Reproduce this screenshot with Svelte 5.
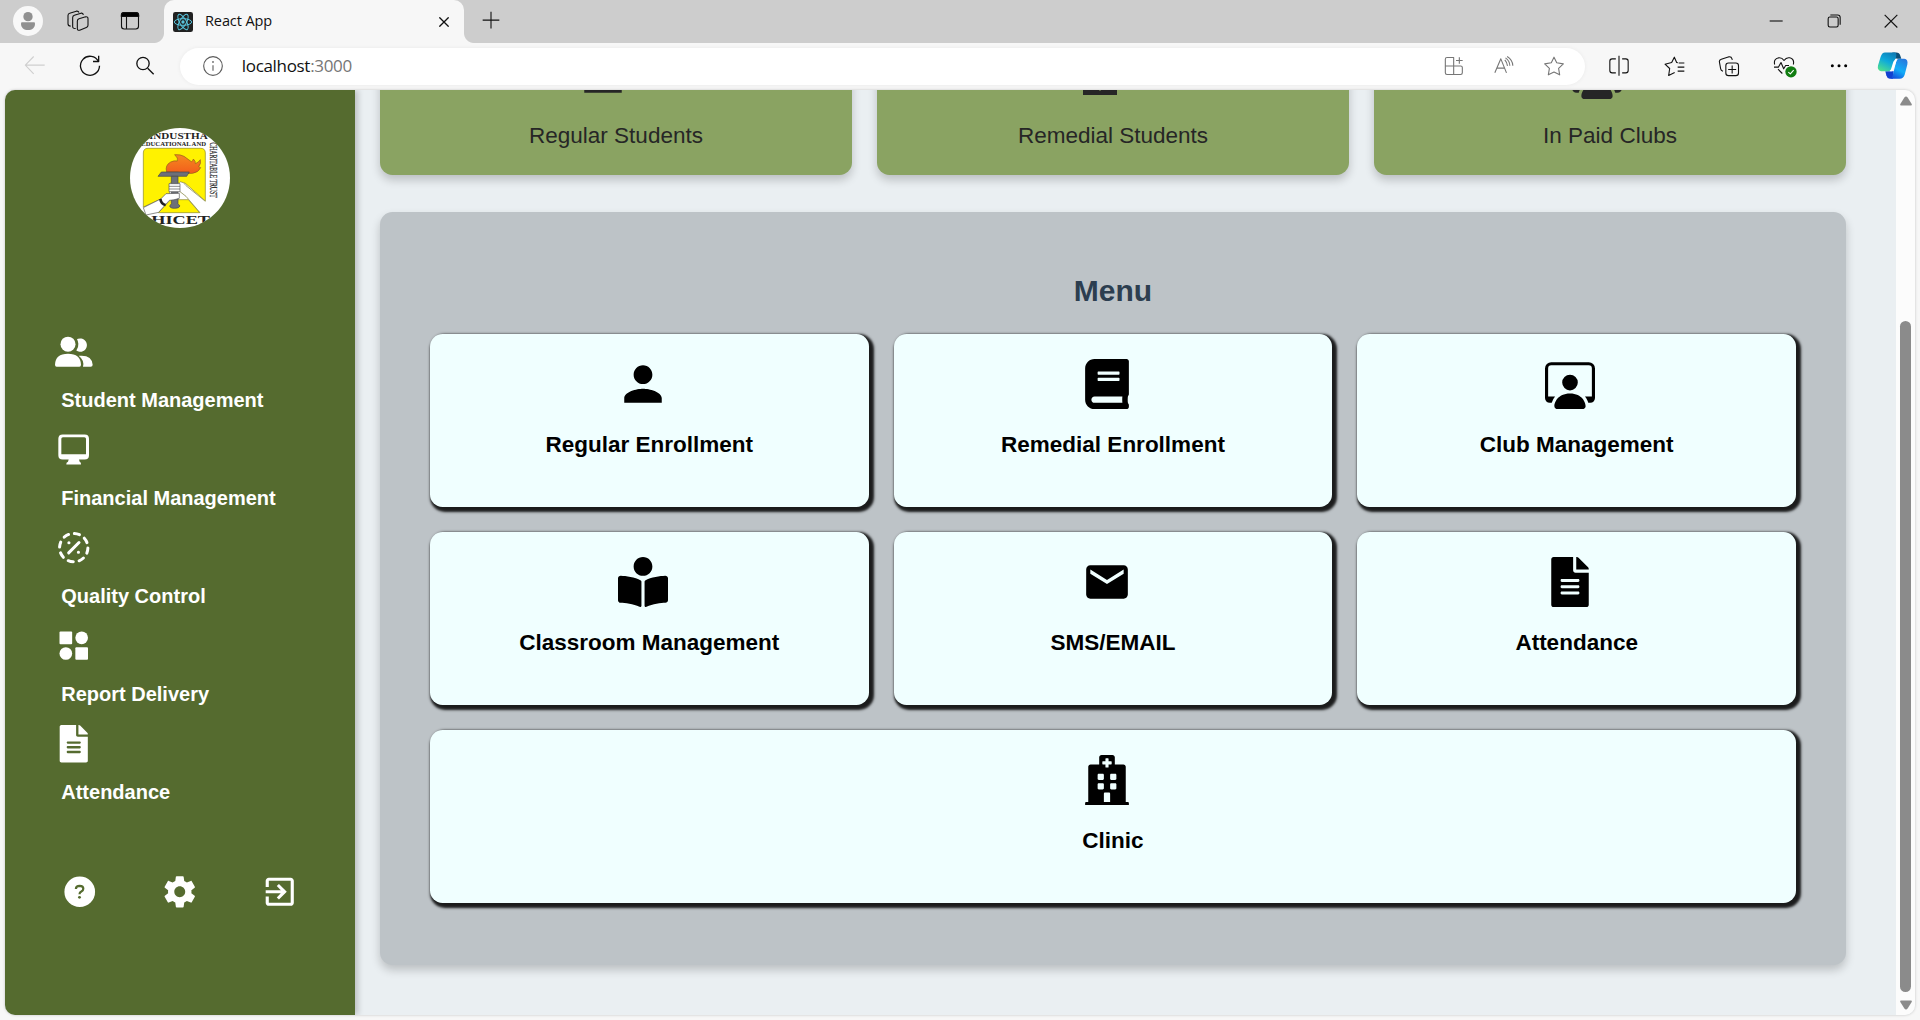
<script>
  const personPath =
    'M256 256c52.805 0 96-43.201 96-96s-43.195-96-96-96-96 43.201-96 96 43.195 96 96 96zm0 48c-63.598 0-192 32.402-192 96v48h384v-48c0-63.598-128.402-96-192-96z';
  const workspacePath =
    'M4 16s-1 0-1-1 1-4 5-4 5 3 5 4-1 1-1 1H4Zm4-5.95a2.5 2.5 0 1 0 0-5 2.5 2.5 0 0 0 0 5ZM2 1a2 2 0 0 0-2 2v9.5A1.5 1.5 0 0 0 1.5 14h.653a5.373 5.373 0 0 1 1.066-2H1V3a1 1 0 0 1 1-1h12a1 1 0 0 1 1 1v9h-2.219c.554.654.89 1.373 1.066 2h.653a1.5 1.5 0 0 0 1.5-1.5V3a2 2 0 0 0-2-2H2Z';
  const filePath =
    'M224 136V0H24C10.7 0 0 10.7 0 24v464c0 13.3 10.7 24 24 24h336c13.3 0 24-10.7 24-24V160H248c-13.2 0-24-10.8-24-24zm64 236c0 6.6-5.4 12-12 12H108c-6.6 0-12-5.4-12-12v-8c0-6.6 5.4-12 12-12h168c6.6 0 12 5.4 12 12v8zm0-64c0 6.6-5.4 12-12 12H108c-6.6 0-12-5.4-12-12v-8c0-6.6 5.4-12 12-12h168c6.6 0 12 5.4 12 12v8zm0-72v8c0 6.6-5.4 12-12 12H108c-6.6 0-12-5.4-12-12v-8c0-6.6 5.4-12 12-12h168c6.6 0 12 5.4 12 12zm96-114.1v6.1H256V0h6.1c6.4 0 12.5 2.5 17 7l97.9 98c4.5 4.5 7 10.6 7 16.9z';

  const stats = [
    { label: 'Regular Students', box: '0 0 512 512', path: personPath },
    { label: 'Remedial Students', box: '0 0 50 50', path: 'M8 20h34v26h-34zM24 30v11.6h2v-11.6z' },
    { label: 'In Paid Clubs', box: '0 0 16 16', path: workspacePath }
  ];

  const menu = [
    { label: 'Regular Enrollment', box: '0 0 512 512', path: personPath },
    {
      label: 'Remedial Enrollment',
      box: '0 0 448 512',
      path: 'M448 360V24c0-13.3-10.7-24-24-24H96C43 0 0 43 0 96v320c0 53 43 96 96 96h328c13.3 0 24-10.7 24-24v-16c0-7.5-3.5-14.3-8.9-18.7-4.2-15.4-4.2-59.3 0-74.7 5.4-4.3 8.9-11.1 8.9-18.6zM128 134c0-3.3 2.7-6 6-6h212c3.3 0 6 2.7 6 6v20c0 3.3-2.7 6-6 6H134c-3.3 0-6-2.7-6-6v-20zm0 64c0-3.3 2.7-6 6-6h212c3.3 0 6 2.7 6 6v20c0 3.3-2.7 6-6 6H134c-3.3 0-6-2.7-6-6v-20zm253.4 250H96c-17.7 0-32-14.3-32-32 0-17.6 14.4-32 32-32h285.4c-1.9 17.1-1.9 46.9 0 64z'
    },
    { label: 'Club Management', box: '0 0 16 16', path: workspacePath },
    {
      label: 'Classroom Management',
      box: '0 0 512 512',
      path: 'M352 96c0-53.02-42.98-96-96-96s-96 42.98-96 96 42.98 96 96 96 96-42.98 96-96zM233.59 241.1c-59.33-36.32-155.43-46.3-203.79-49.05C13.55 191.13 0 203.51 0 219.14v222.8c0 14.33 11.59 26.28 26.49 27.05 43.66 2.29 131.99 10.68 193.04 41.43 9.37 4.72 20.48-1.71 20.48-11.87V252.56c-.01-4.67-2.32-8.95-6.42-11.46zm248.61-49.05c-48.35 2.74-144.46 12.73-203.78 49.05-4.1 2.51-6.41 6.96-6.41 11.63v245.79c0 10.19 11.14 16.63 20.54 11.9 61.04-30.72 149.32-39.11 192.97-41.4 14.9-.78 26.49-12.73 26.49-27.06V219.14c-.01-15.63-13.56-28.01-29.81-27.09z'
    },
    {
      label: 'SMS/EMAIL',
      box: '0 0 24 24',
      path: 'M20 4H4c-1.1 0-1.99.9-1.99 2L2 18c0 1.1.9 2 2 2h16c1.1 0 2-.9 2-2V6c0-1.1-.9-2-2-2zm0 4l-8 5-8-5V6l8 5 8-5v2z'
    },
    { label: 'Attendance', box: '0 0 384 512', path: filePath },
    {
      label: 'Clinic',
      box: '0 0 448 512',
      wide: true,
      path: 'M448 492v20H0v-20c0-6.627 5.373-12 12-12h20V120c0-13.255 10.745-24 24-24h88V24c0-13.255 10.745-24 24-24h112c13.255 0 24 10.745 24 24v72h88c13.255 0 24 10.745 24 24v360h20c6.627 0 12 5.373 12 12zM308 192h-40c-6.627 0-12 5.373-12 12v40c0 6.627 5.373 12 12 12h40c6.627 0 12-5.373 12-12v-40c0-6.627-5.373-12-12-12zm-168 64h40c6.627 0 12-5.373 12-12v-40c0-6.627-5.373-12-12-12h-40c-6.627 0-12 5.373-12 12v40c0 6.627 5.373 12 12 12zm104 128h-40c-6.627 0-12 5.373-12 12v84h64v-84c0-6.627-5.373-12-12-12zm64-96h-40c-6.627 0-12 5.373-12 12v40c0 6.627 5.373 12 12 12h40c6.627 0 12-5.373 12-12v-40c0-6.627-5.373-12-12-12zm-116 12c0-6.627-5.373-12-12-12h-40c-6.627 0-12 5.373-12 12v40c0 6.627 5.373 12 12 12h40c6.627 0 12-5.373 12-12v-40zM182 96h26v26a6 6 0 0 0 6 6h20a6 6 0 0 0 6-6V96h26a6 6 0 0 0 6-6V70a6 6 0 0 0-6-6h-26V38a6 6 0 0 0-6-6h-20a6 6 0 0 0-6 6v26h-26a6 6 0 0 0-6 6v20a6 6 0 0 0 6 6z'
    }
  ];
</script>

<div class="window">
  <header class="tabstrip">
    <span class="slot avatar">
      <svg viewBox="39 18 90 90"><circle cx="84" cy="63" r="45" fill="#f8f8f8" /><circle cx="84" cy="50" r="14" fill="#919191" /><path d="M66 67h36q3 0 3 4c0 12-9 19-21 19s-21-7-21-19q0-4 3-4z" fill="#919191" /></svg>
    </span>
    <span class="slot spaces">
      <svg class="line" viewBox="188 19.5 90 90"><path d="M236 58L256 52Q263 51 263 58V77Q263 82 258 84L238 92Q231 94 231 87V65Q231 60 236 58ZM226 87Q217 88 217 81V54Q217 49 222 47L242 41Q248 40 249 46M211 80Q203 80 203 73V48Q203 42 208 41L228 35Q234 34 236 39" /></svg>
    </span>
    <span class="slot panes">
      <svg class="line" viewBox="345 19.5 90 90"><rect x="364.500" y="39.500" width="51" height="49" rx="8" /><path d="M364 51V46Q365 39 372 39H408Q415 39 416 46V51Z" fill="#000" /><path d="M379.500 51V88" /></svg>
    </span>
    <div class="tab">
      <svg class="favicon" viewBox="0 0 60 60"><rect width="60" height="60" rx="7" fill="#212121" /><g fill="none" stroke="#58c4dc" stroke-width="3"><ellipse cx="30" cy="30" rx="26" ry="10" /><ellipse cx="30" cy="30" rx="26" ry="10" transform="rotate(60 30 30)" /><ellipse cx="30" cy="30" rx="26" ry="10" transform="rotate(120 30 30)" /></g><circle cx="30" cy="30" r="5" fill="#58c4dc" /></svg>
      <span class="title">React App</span>
      <svg class="line tab-close" viewBox="0 0 30 30"><path d="M1 1L29 29M29 1L1 29" stroke-width="4" /></svg>
    </div>
    <span class="slot plus"><svg class="line" viewBox="1427 19.500 90 90"><path d="M1447 62H1497M1472 37V87" /></svg></span>
    <span class="stretch"></span>
    <span class="slot control"><svg class="line" viewBox="1084 19.500 90 90"><path d="M1110 64.500H1149" /></svg></span>
    <span class="slot control"><svg class="line" viewBox="1255 19.500 90 90"><rect x="1282.500" y="52.500" width="30" height="30" rx="5" /><path d="M1289 46.500H1311Q1318.500 46.500 1318.500 54V76" /></svg></span>
    <span class="slot control"><svg class="line" viewBox="1429 19.500 90 90"><path d="M1455 46L1493 84M1493 46L1455 84" /></svg></span>
  </header>

  <div class="toolbar">
    <span class="slot tool"><svg class="line off" viewBox="60 154.500 90 90"><path d="M76 197H134M101 171L76 197L101 223" /></svg></span>
    <span class="slot tool"><svg class="line" viewBox="225 154.500 90 90"><path d="M295.500 186A28.500 28.500 0 1 0 298.500 199" stroke-width="4" /><path d="M296 169V186H279" stroke-width="4" /></svg></span>
    <span class="slot tool"><svg class="line" viewBox="390 154.500 90 90"><circle cx="429" cy="192" r="18.500" stroke-width="4" /><path d="M443 206L461 224" stroke-width="4" /></svg></span>
    <div class="address">
      <svg class="line info" viewBox="608 170 60 60"><circle cx="638" cy="200" r="28" /><path d="M638 198V214" /><circle cx="638" cy="188" r="1" /></svg>
      <span class="url">localhost<i>:3000</i></span>
      <span class="stretch"></span>
      <span class="slot hint"><svg class="line" viewBox="117 155.500 90 90"><path d="M141 175H161V226H141Q136 226 136 221V180Q136 175 141 175ZM136 200.500H182Q187 200.500 187 205V221Q187 226 182 226H161M178 174V194M168 184H188" /></svg></span>
      <span class="slot hint"><svg class="line" viewBox="268.500 155.500 90 90"><path d="M286 221L304 179L321 221M292 207H315M316 182Q323 190 324 200M318 176Q331 185 331 200M323 172Q340 183 340 200" /></svg></span>
      <span class="slot hint"><svg class="line" viewBox="416.500 155.500 90 90"><path d="M461.500 174L469.700 190.700L489.500 194L475.300 207.500L478.500 227L461.500 218.500L444.500 227L447.700 207.500L433.500 194L453.300 190.700Z" /></svg></span>
    </div>
    <span class="slot tool"><svg class="line" viewBox="613.500 154.500 90 90"><path d="M658.500 169V229M649 178H638Q631 178 631 185V213Q631 220 638 220H649M668 178H679Q686 178 686 185V213Q686 220 679 220H668" /></svg></span>
    <span class="slot tool"><svg class="line" viewBox="779 154.500 90 90"><path d="M836 190L832 189L825 173L817 189L797 194L811 207L808 228L826 219M838 190.500H855M835 203H855M835 215H855" /></svg></span>
    <span class="slot tool"><svg class="line" viewBox="945 154.500 90 90"><rect x="980.500" y="190.500" width="38" height="38" rx="8" /><path d="M999.500 198V222M987.500 210H1011.500M972 215Q966 213 965 208L961 186Q961 181 967 179L990 172Q997 171 999 178L1000 181" /></svg></span>
    <span class="slot tool"><svg class="line" viewBox="1110 154.500 90 90"><path d="M1127 195Q1123 178 1139 175Q1149 174 1155 183Q1162 173 1172 175Q1187 179 1183 195M1125 203H1138L1146 189L1154 208L1160 198H1170M1137 209L1150 222" /><circle cx="1176" cy="217" r="17" fill="#107c10" stroke="none" /><path d="M1168 218L1174 223L1184 212" stroke="#fff" /></svg></span>
    <span class="slot tool"><svg viewBox="1275 154.500 90 90"><circle cx="1300" cy="199" r="4.500" /><circle cx="1320" cy="199" r="4.500" /><circle cx="1340" cy="199" r="4.500" /></svg></span>
    <span class="slot copilot">
      <svg viewBox="1432 151.500 96 96">
        <defs>
          <linearGradient id="cp-a" x1="0.700" y1="0" x2="0.200" y2="1"><stop offset="0" stop-color="#0d7fb8" /><stop offset="0.450" stop-color="#0da9dc" /><stop offset="1" stop-color="#4fe08e" /></linearGradient>
          <linearGradient id="cp-b" x1="0.800" y1="0" x2="0.300" y2="1"><stop offset="0" stop-color="#2a78dc" /><stop offset="0.550" stop-color="#12aef8" /><stop offset="1" stop-color="#1450dc" /></linearGradient>
        </defs>
        <path d="M1478 159H1490Q1499 159 1502 169L1505 178H1488L1478 170Z" fill="#0b4f78" />
        <path d="M1457 215H1482L1480 238H1470Q1462 236 1460 228Z" fill="#1240d0" />
        <path d="M1456 159H1486Q1492 161 1489 174L1477 206Q1475 215 1464 215H1444Q1432 212 1435 198L1443 172Q1447 159 1456 159Z" fill="url(#cp-a)" />
        <path d="M1500 178H1514Q1526 180 1523 195L1515 226Q1511 238 1500 238H1470Q1478 236 1480 224L1489 188Q1491 178 1500 178Z" fill="url(#cp-b)" />
        <path d="M1481 187L1488 178H1493L1483 205L1477 215H1470L1474 209Z" fill="#fff" />
      </svg>
    </span>
  </div>

  <div class="page">
    <aside class="sidebar">
      <svg class="logo" viewBox="30 23 300 300">
        <defs>
          <clipPath id="seal"><circle cx="180" cy="173" r="150" /></clipPath>
          <linearGradient id="flame" x1="0" y1="0" x2="0" y2="1"><stop offset="0" stop-color="#f58a1f" /><stop offset="1" stop-color="#f25c1c" /></linearGradient>
        </defs>
        <g clip-path="url(#seal)">
          <rect x="30" y="23" width="300" height="300" fill="#fff" />
          <path d="M70 260V98Q70 84 84 84H242Q256 84 256 98V242L195 188H150L148 224Z" fill="#fff200" stroke="#8a8526" stroke-width="2" />
          <path d="M115 277L152 238H205L239 277Z" fill="#fff200" stroke="#8a8526" stroke-width="2" />
          <path d="M140 155Q134 135 152 125Q162 120 172 122Q176 114 164 103Q182 102 192 108Q206 118 214 124Q220 121 220 116Q228 124 226 130Q236 126 241 118Q244 130 236 139L242 142Q236 156 218 159Q190 162 172 155Z" fill="url(#flame)" stroke="#8f5a1c" stroke-width="2" />
          <path d="M124 155H208L200 168H114Z" fill="#6d7078" stroke="#44464a" stroke-width="2" />
          <path d="M154 168H174V250L180 257Q178 264 164 264Q150 264 149 257L154 250Z" fill="#6d7078" stroke="#44464a" stroke-width="2" />
          <path d="M180 184Q192 184 198 194L256 243V285L236 272L196 226L180 214Z" fill="#fff" />
          <path d="M180 184Q192 184 198 196L256 243M180 214L198 228L240 277" fill="none" stroke="#77772c" stroke-width="2" />
          <path d="M147 190H180V214H147ZM70 262L122 236L138 220L178 219V234Q160 240 148 240L116 276L78 284Z" fill="#fff" stroke="#555" stroke-width="2" />
          <path d="M147 198H180M147 206H180" stroke="#555" stroke-width="2" />
          <path d="M121 236Q124 252 137 254" fill="none" stroke="#222" stroke-width="8" />
          <text x="87" y="55" font-size="25" textLength="176" lengthAdjust="spacingAndGlyphs">INDUSTHA</text>
          <text x="64" y="77" font-size="16" textLength="194" lengthAdjust="spacingAndGlyphs">EDUCATIONAL AND</text>
          <text transform="translate(271 66) rotate(90)" font-size="28" textLength="166" lengthAdjust="spacingAndGlyphs" class="side">CHARITABLE TRUST</text>
          <text x="94" y="311" font-size="38" textLength="176" lengthAdjust="spacingAndGlyphs">HICET</text>
        </g>
      </svg>

      <nav>
        <a class="item">
          <svg viewBox="165 69.500 112.500 112.500"><circle cx="204" cy="103" r="22.500" /><path d="M165 165Q166 132 204 132Q242 132 243 165Q243 171 238 171H170Q165 171 165 165ZM234 87A20 20 0 1 1 229 122Q236 113 235 102Q235 94 231 88ZM236 138Q276 134 278 165Q278 171 272 171H249Q254 152 236 138Z" /></svg>
          <span>Student Management</span>
        </a>
        <a class="item">
          <svg viewBox="165 363.500 112.500 112.500"><path fill-rule="evenodd" d="M188 374H254Q267 374 267 387V436Q267 449 254 449H237L239 456Q244 458 243 464H199Q198 458 204 456L206 449H188Q175 449 175 436V387Q175 374 188 374ZM189 382Q184 382 184 387V433H258V387Q258 382 253 382Z" /></svg>
          <span>Financial Management</span>
        </a>
        <a class="item">
          <svg class="percent" viewBox="165 657.500 112.500 112.500"><circle cx="221.200" cy="713.500" r="42.500" pathLength="360" stroke-dasharray="21 24" stroke-dashoffset="-1.500" /><path d="M206 729L237 698M206.500 699h.5M235 727.500h.5" /></svg>
          <span>Quality Control</span>
        </a>
        <a class="item">
          <svg viewBox="165 951.500 112.500 112.500"><rect x="178.500" y="965" width="38" height="38" rx="3" /><circle cx="245" cy="984" r="19" /><circle cx="197.500" cy="1031" r="19" /><rect x="226" y="1012" width="38" height="38" rx="3" /></svg>
          <span>Report Delivery</span>
        </a>
        <a class="item">
          <svg viewBox="0 0 384 512"><path d={filePath} /></svg>
          <span>Attendance</span>
        </a>
      </nav>

      <div class="actions">
        <svg viewBox="183 699 112.500 112.500"><circle cx="239.250" cy="755.250" r="46" /><path d="M227.500 747Q228 737.500 239 737.500Q250 738 250 746Q250 751 244 754.500Q238.500 757.500 238.500 763" fill="none" stroke="#556b2f" stroke-width="6.500" /><circle cx="238.500" cy="772" r="4.300" fill="#556b2f" /></svg>
        <svg viewBox="0 0 24 24"><path d="M19.430 12.980c.04-.32.07-.64.07-.98s-.03-.66-.07-.98l2.110-1.650c.19-.15.24-.42.12-.64l-2-3.460c-.12-.22-.39-.3-.61-.22l-2.490 1c-.52-.4-1.080-.73-1.690-.98l-.38-2.650C14.460 2.180 14.250 2 14 2h-4c-.25 0-.46.18-.49.42l-.38 2.650c-.61.25-1.170.59-1.690.98l-2.490-1c-.23-.09-.49 0-.61.22l-2 3.460c-.13.22-.07.49.12.64l2.110 1.650c-.04.32-.07.65-.07.98s.03.66.07.98l-2.110 1.650c-.19.15-.24.42-.12.64l2 3.460c.12.22.39.3.61.22l2.490-1c.52.4 1.080.73 1.690.98l.38 2.650c.03.24.24.42.49.42h4c.25 0 .46-.18.49-.42l.38-2.650c.61-.25 1.170-.59 1.690-.98l2.490 1c.23.09.49 0 .61-.22l2-3.460c.12-.22.07-.49-.12-.64l-2.110-1.650zM12 15.500c-1.930 0-3.500-1.570-3.500-3.500s1.570-3.500 3.500-3.500 3.500 1.570 3.500 3.500-1.570 3.500-3.500 3.500z" /></svg>
        <svg viewBox="0 0 512 512"><path d="M215.469 332.802l29.863 29.864L352 256 245.332 149.333l-29.863 29.865 55.469 55.469H64v42.666h205.864l-54.395 55.469zM405.334 64H106.666C83.198 64 64 83.198 64 106.666V192h42.666v-85.334h298.668v298.668H106.666V320H64v85.334C64 428.802 83.198 448 106.666 448h298.668C428.802 448 448 428.802 448 405.334V106.666C448 83.198 428.802 64 405.334 64z" /></svg>
      </div>
    </aside>

    <main>
      <section class="stats">
        {#each stats as stat}
          <article class="stat">
            <svg class="glyph" viewBox={stat.box}><path d={stat.path} fill-rule="evenodd" /></svg>
            <p>{stat.label}</p>
          </article>
        {/each}
      </section>

      <section class="panel">
        <h2>Menu</h2>
        <div class="grid">
          {#each menu as entry}
            <article class="card" class:wide={entry.wide}>
              <svg class="glyph" viewBox={entry.box}><path d={entry.path} /></svg>
              <h3>{entry.label}</h3>
            </article>
          {/each}
        </div>
      </section>
    </main>

    <div class="scrollbar">
      <svg viewBox="0 0 12 10"><path d="M6 .5Q7 .5 7.600 1.400L11.700 8Q12.300 9.500 11 9.500H1Q-.3 9.500 .3 8L4.400 1.400Q5 .5 6 .5Z" /></svg>
      <div class="thumb"></div>
      <svg viewBox="0 0 12 10"><path d="M6 9.500Q7 9.500 7.600 8.600L11.700 2Q12.300 .5 11 .5H1Q-.3 .5 .3 2L4.400 8.600Q5 9.500 6 9.500Z" /></svg>
    </div>
  </div>
</div>

<style>
  :global(body) {
    margin: 0;
    overflow: hidden;
  }
  .window {
    display: flex;
    flex-direction: column;
    box-sizing: border-box;
    width: 1920px;
    height: 1020px;
    background: #f7f7f7;
    font-family: 'Liberation Sans', Arial, sans-serif;
    overflow: hidden;
  }
  svg {
    display: block;
    flex: none;
  }
  .stretch {
    flex: 1;
  }
  .slot {
    display: flex;
    flex: none;
    align-items: center;
    justify-content: center;
  }
  .slot svg {
    width: 30px;
    height: 30px;
  }
  .line {
    fill: none;
    stroke: #111;
    stroke-width: 3.3;
    stroke-linejoin: round;
  }
  .line.off {
    stroke: #cfcfcf;
  }

  .tabstrip {
    display: flex;
    align-items: center;
    box-sizing: border-box;
    height: 43px;
    padding-bottom: 1px;
    background: #cdcdcd;
  }
  .avatar {
    width: 56px;
  }
  .spaces {
    width: 43px;
  }
  .panes {
    width: 62px;
    margin-right: 3px;
  }
  .tab {
    position: relative;
    display: flex;
    align-items: center;
    align-self: flex-start;
    box-sizing: border-box;
    width: 300px;
    height: 43px;
    padding: 0 15px 0 9px;
    border-radius: 10px 10px 0 0;
    background: #f7f7f7;
  }
  .tab::before,
  .tab::after {
    content: '';
    position: absolute;
    bottom: 0;
    width: 10px;
    height: 10px;
  }
  .tab::before {
    left: -10px;
    background: radial-gradient(circle at 0 0, #cdcdcd 9.500px, #f7f7f7 10.500px);
  }
  .tab::after {
    right: -10px;
    background: radial-gradient(circle at 100% 0, #cdcdcd 9.500px, #f7f7f7 10.500px);
  }
  .favicon {
    width: 20px;
    height: 20px;
    margin-top: 1px;
  }
  .title {
    flex: 1;
    margin: 0 0 2px 12px;
    color: #111;
    font: 14.500px/20px 'Open Sans', sans-serif;
    letter-spacing: -0.1px;
  }
  .tab-close {
    width: 10px;
    height: 10px;
    margin-top: 1px;
  }
  .plus {
    width: 53px;
  }
  .control {
    width: 57.500px;
  }

  .toolbar {
    display: flex;
    align-items: center;
    box-sizing: border-box;
    height: 47px;
    padding: 0 1px 1px 7.500px;
  }
  .tool {
    width: 55.100px;
  }
  .address {
    display: flex;
    flex: 1;
    align-items: center;
    height: 37px;
    margin: 0 7px;
    padding: 0 6px 0 23px;
    border-radius: 19px;
    background: #fff;
    box-shadow: 0 0 4px rgba(0, 0, 0, 0.06);
  }
  .info {
    width: 20px;
    height: 20px;
    stroke: #5c5c5c;
  }
  .url {
    margin-left: 19px;
    color: #111;
    font: 17px/24px 'Open Sans', sans-serif;
    letter-spacing: -0.32px;
  }
  .url i {
    color: #767676;
    font-style: normal;
  }
  .hint {
    width: 50px;
  }
  .hint .line {
    stroke: #767676;
  }
  .copilot {
    width: 52px;
  }
  .copilot svg {
    width: 32px;
    height: 32px;
  }

  .page {
    display: flex;
    height: 925px;
    margin: 0 5px;
    border-radius: 10px;
    background: #eaeff2;
    box-shadow: 0 0 3px rgba(0, 0, 0, 0.22);
    overflow: hidden;
  }
  .sidebar {
    position: relative;
    display: flex;
    flex: none;
    flex-direction: column;
    box-sizing: border-box;
    width: 350px;
    padding-top: 38px;
    background: #556b2f;
    box-shadow: 2.500px 0 6px rgba(0, 0, 0, 0.2);
    color: #fff;
    fill: #fff;
  }
  .logo {
    align-self: center;
    width: 100px;
    height: 100px;
  }
  .logo text {
    fill: #222;
    font-family: 'Liberation Serif', serif;
    font-weight: 700;
  }
  .logo .side {
    font-weight: 400;
    stroke: #222;
    stroke-width: 0.6;
  }
  nav {
    margin-top: 105px;
    padding-left: 50px;
  }
  .item {
    display: block;
    height: 98px;
  }
  .item svg,
  .actions svg {
    width: 37.500px;
    height: 37.500px;
  }
  .item span {
    display: block;
    padding: 17.500px 0 0 6.250px;
    font-size: 20px;
    font-weight: 700;
    line-height: 24px;
  }
  .percent {
    fill: none;
    stroke: #fff;
    stroke-width: 9;
    stroke-linecap: round;
  }
  .actions {
    display: flex;
    gap: 62.500px;
    margin-top: 50px;
    padding-left: 56px;
  }

  main {
    display: flex;
    flex: 1;
    flex-direction: column;
    justify-content: flex-end;
    gap: 37px;
    padding: 0 50px 50px 25px;
  }
  .stats {
    display: grid;
    flex: none;
    grid-template-columns: repeat(3, 1fr);
    gap: 25px;
  }
  .stat {
    display: flex;
    flex-direction: column;
    align-items: center;
    box-sizing: border-box;
    height: 151px;
    padding-top: 25px;
    border-radius: 12.500px;
    background: #8aa362;
    box-shadow: 0 5px 10px rgba(0, 0, 0, 0.2);
    color: #262626;
    fill: #262626;
  }
  .glyph {
    width: 50px;
    height: 50px;
    margin-right: 12.500px;
  }
  .stat .glyph {
    margin-right: 26px;
  }
  .stat p {
    margin: 23px 0 0;
    font-size: 22.500px;
    line-height: 28px;
  }
  .panel {
    flex: none;
    box-sizing: border-box;
    height: 753px;
    padding: 61px 50px 62px;
    border-radius: 12.500px;
    background: #bdc3c7;
    box-shadow: 0 5px 10px rgba(0, 0, 0, 0.2);
  }
  h2 {
    margin: 0 0 25px;
    color: #2c3e50;
    font-size: 30px;
    line-height: 36px;
    text-align: center;
  }
  .grid {
    display: grid;
    grid-template-columns: repeat(3, 1fr);
    gap: 25px;
  }
  .card {
    display: flex;
    flex-direction: column;
    align-items: center;
    box-sizing: border-box;
    height: 173px;
    padding-top: 25px;
    border-radius: 12.500px;
    background: #f0ffff;
    box-shadow: 2.500px 2.500px 2.500px 2.500px rgba(0, 0, 0, 0.86);
    color: #000;
  }
  .wide {
    grid-column: 1 / -1;
  }
  h3 {
    margin: 22px 0 0;
    font-size: 22.500px;
    line-height: 28px;
  }

  .scrollbar {
    display: flex;
    flex: none;
    flex-direction: column;
    align-items: center;
    box-sizing: border-box;
    width: 19px;
    padding: 6px 0 5px;
    background: #fcfcfc;
    fill: #8b8b8b;
  }
  .scrollbar svg {
    width: 12px;
    height: 10px;
  }
  .thumb {
    width: 11px;
    height: 671px;
    margin: auto 0 8px;
    border-radius: 6px;
    background: #8b8b8b;
  }
</style>
